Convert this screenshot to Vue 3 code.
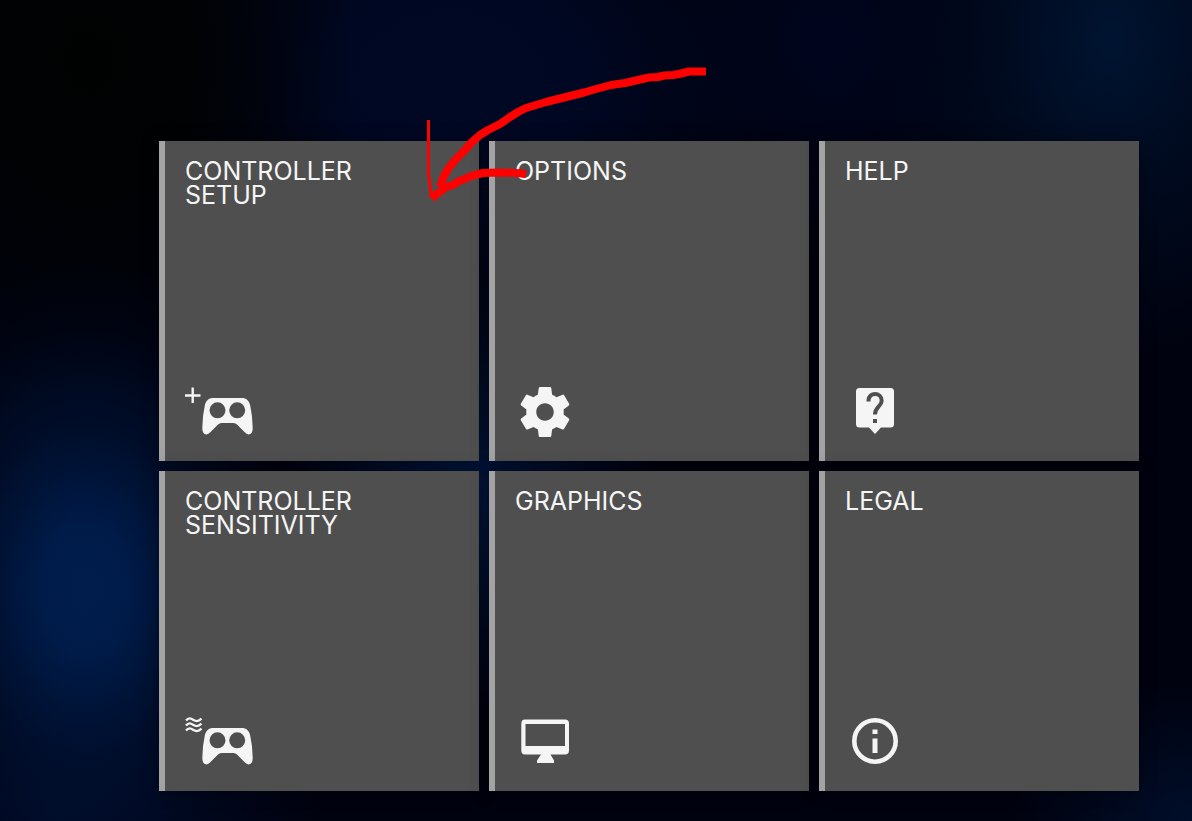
<script setup>
const tiles = [
  { id: 'setup', lines: ['CONTROLLER', 'SETUP'], icon: 'pad-plus' },
  { id: 'options', lines: ['OPTIONS'], icon: 'gear' },
  { id: 'help', lines: ['HELP'], icon: 'help' },
  { id: 'sensitivity', lines: ['CONTROLLER', 'SENSITIVITY'], icon: 'pad-waves' },
  { id: 'graphics', lines: ['GRAPHICS'], icon: 'monitor' },
  { id: 'legal', lines: ['LEGAL'], icon: 'info' },
]
</script>

<template>
  <main class="screen">
    <nav class="grid" aria-label="Settings">
      <button v-for="tile in tiles" :key="tile.id" type="button" class="tile">
        <span class="title">
          <template v-for="(line, i) in tile.lines" :key="line"><br v-if="i > 0" />{{ line }}</template>
        </span>
        <svg class="icon" viewBox="0 0 80 60" aria-hidden="true">
          <g v-if="tile.icon === 'pad-plus' || tile.icon === 'pad-waves'">
            <path
              fill-rule="evenodd"
              d="M28.500 18H56.500C61.500 18 64 20.500 65.200 25.500Q67.600 36 67.700 48Q67.600 54.400 63.600 54.500Q61.600 54.400 59.500 52L52 44.600Q50.600 43 48.500 43H36.500Q34.400 43 33 44.600L25.500 52Q23.400 54.400 21.400 54.500Q17.400 54.400 17.300 48Q17.400 36 19.800 25.500C21 20.500 23.500 18 28.500 18ZM32.500 22.300A8 8 0 1 0 32.500 38.300A8 8 0 1 0 32.500 22.300ZM52.200 22.300A8 8 0 1 0 52.200 38.300A8 8 0 1 0 52.200 22.300Z"
            />
            <path v-if="tile.icon === 'pad-plus'" class="stroke thin" d="M0 15.500H15.500M7.700 7.500V23" />
            <path
              v-else
              class="stroke wave"
              d="M1 10.500C4 7 6 8.500 8.500 10S13 12 16.500 8.700M1 15.500C4 12 6 13.500 8.500 15S13 17 16.500 13.700M1 20.500C4 17 6 18.500 8.500 20S13 22 16.500 18.700"
            />
          </g>
          <path
            v-else-if="tile.icon === 'gear'"
            transform="translate(0 2) scale(2.5)"
            d="M19.430 12.980c.04-.32.07-.64.07-.98s-.03-.66-.07-.98l2.110-1.650c.19-.15.24-.42.12-.64l-2-3.460c-.12-.22-.39-.3-.61-.22l-2.490 1c-.52-.4-1.080-.73-1.690-.98l-.38-2.650C14.460 2.180 14.250 2 14 2h-4c-.25 0-.46.18-.49.42l-.38 2.650c-.61.25-1.170.59-1.690.98l-2.490-1c-.23-.09-.49 0-.61.22l-2 3.460c-.13.22-.07.49.12.64l2.110 1.650c-.04.32-.07.65-.07.98s.03.66.07.98l-2.110 1.650c-.19.15-.24.42-.12.64l2 3.460c.12.22.39.3.61.22l2.490-1c.52.4 1.080.73 1.690.98l.38 2.650c.03.24.24.42.49.42h4c.25 0 .46-.18.49-.42l.38-2.650c.61-.25 1.170-.59 1.690-.98l2.490 1c.23.09.49 0 .61-.22l2-3.460c.12-.22.07-.49-.12-.64l-2.110-1.650zM12 15.500c-1.930 0-3.500-1.570-3.500-3.500s1.570-3.500 3.500-3.500 3.500 1.570 3.500 3.500-1.570 3.500-3.500 3.500z"
          />
          <g v-else-if="tile.icon === 'help'">
            <path d="M14.500 8H45.500Q49 8 49 11.500V44Q49 47.500 45.500 47.500H36L30 54L24 47.500H14.500Q11 47.500 11 44V11.500Q11 8 14.500 8Z" />
            <path class="cut" d="M23.500 21.500V20.500C23.500 11.800 36.700 12 36.700 20.700C36.700 26.500 30 26.500 30 34.500" />
            <path class="hole" d="M28 39H32V43H28Z" />
          </g>
          <path
            v-else-if="tile.icon === 'monitor'"
            fill-rule="evenodd"
            d="M10 9.500H50Q54 9.500 54 13.500V40.500Q54 44.500 50 44.500H35.500L39 50.500V53H22V50.500L26 44.500H10Q6.300 44.500 6.300 40.500V13.500Q6.300 9.500 10 9.500ZM10.500 14V36H50V14Z"
          />
          <g v-else>
            <circle class="stroke ring" cx="30" cy="31" r="20.700" />
            <path d="M27.500 19.500H32.500V24H27.500ZM27.500 28.500H32.500V43H27.500Z" />
          </g>
        </svg>
      </button>
    </nav>

    <svg class="arrow" viewBox="0 0 310 155" aria-hidden="true">
      <path class="ink" d="M296 16.500H279L271 18.500L263 20L254 20.500L248 22L239 22.500L228 25L215 28L201 30L186 34L174 37.500L160 41L148 44L136 47L126 50L116 53L108 57L100 62L90 69L78 75L70 80L62 87L54 96L46 104L38 114L33 123L30 132" />
      <path class="ink" d="M116 119L106 118L88 117.500L73 118L61 121L55 124L49 126L43 130L36 132L30 137L26 139L22 144" />
      <path class="pen" d="M18.500 65V119L20.500 134L21 142" />
    </svg>
  </main>
</template>

<style scoped>
.screen {
  position: relative;
  box-sizing: border-box;
  min-height: 100vh;
  padding: 141px 53px 30px 159px;
  overflow: hidden;
  font-family: Inter, Lato, sans-serif;
  background:
    radial-gradient(ellipse 230px 330px at 85px 590px, #001d4c 0%, #001b48 20%, rgba(0, 18, 52, 0.7) 50%, rgba(0, 10, 34, 0.25) 80%, transparent 100%),
    radial-gradient(ellipse 190px 220px at 470px 490px, #00163e 0%, transparent 100%),
    radial-gradient(ellipse 270px 340px at 90px 60px, #000202 0%, #000203 35%, transparent 100%),
    radial-gradient(ellipse 320px 240px at 450px 80px, #000824 0%, #000722 40%, transparent 100%),
    radial-gradient(ellipse 180px 220px at 830px 40px, #00051e 0%, transparent 100%),
    radial-gradient(ellipse 240px 320px at 1110px 40px, #001431 0%, rgba(0, 16, 42, 0.6) 45%, transparent 100%),
    radial-gradient(ellipse 180px 140px at 1192px 821px, #000e2a 0%, transparent 100%),
    radial-gradient(ellipse 260px 160px at 60px 821px, #000b2a 0%, transparent 100%),
    #00020f;
}
.grid {
  display: grid;
  grid-template-columns: repeat(3, minmax(0, 1fr));
  gap: 10px;
}
.tile {
  display: flex;
  flex-direction: column;
  justify-content: space-between;
  align-items: flex-start;
  box-sizing: border-box;
  aspect-ratio: 1;
  margin: 0;
  padding: 18px 20px 21px;
  border: 0;
  border-left: 6px solid #a3a3a3;
  background: #4f4f4f;
  box-shadow: 0 0 16px rgba(0, 0, 0, 0.4);
  color: #f5f5f5;
  font-family: inherit;
  font-size: 25px;
  font-weight: 400;
  line-height: 24px;
  text-align: left;
}
.icon {
  display: block;
  width: 80px;
  height: 60px;
  fill: #f5f5f5;
}
.stroke {
  fill: none;
  stroke: #f5f5f5;
}
.thin {
  stroke-width: 2.400;
}
.wave {
  stroke-width: 2.400;
}
.ring {
  stroke-width: 4.600;
}
.cut {
  fill: none;
  stroke: #4f4f4f;
  stroke-width: 4;
}
.hole {
  fill: #4f4f4f;
}
.arrow {
  position: absolute;
  left: 410px;
  top: 55px;
  width: 310px;
  height: 155px;
  fill: none;
  stroke: #ff0000;
  pointer-events: none;
}
.ink {
  stroke-width: 8;
  stroke-linejoin: round;
}
.pen {
  stroke-width: 3;
}
</style>

<style>
body {
  margin: 0;
  background: #00020f;
}
</style>
